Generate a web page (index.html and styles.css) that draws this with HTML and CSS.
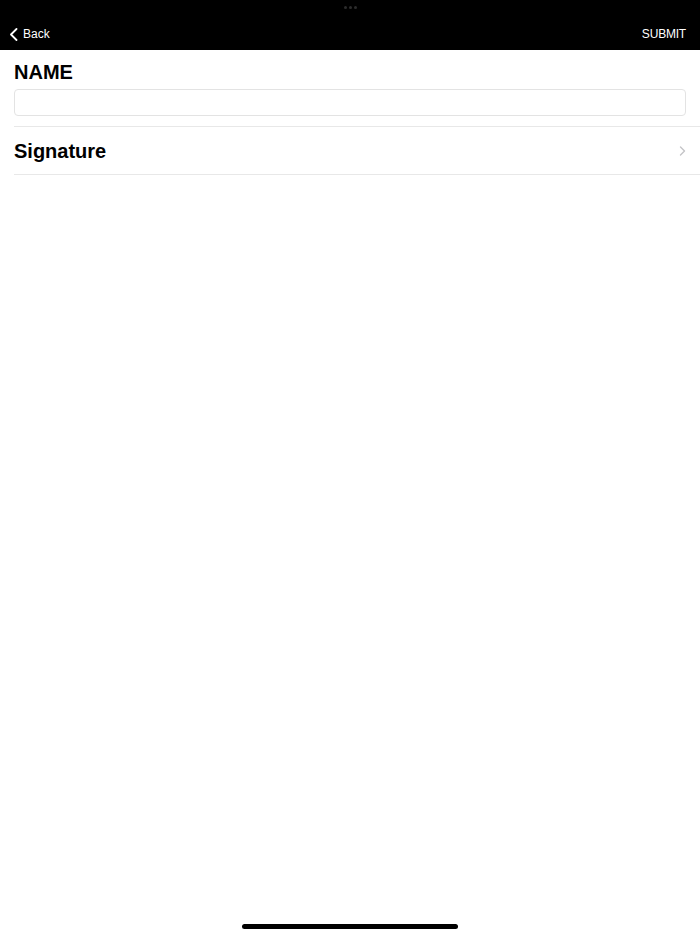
FILE: index.html
```html
<!DOCTYPE html>
<html lang="en">
<head>
    <meta charset="UTF-8">
    <meta name="viewport" content="width=device-width, initial-scale=1.0">
    <title>Signature</title>
    <link rel="stylesheet" href="styles.css">
</head>
<body>
    <div class="screen">
        <header class="navbar">
            <div class="grabber">
                <span></span><span></span><span></span>
            </div>
            <div class="nav-row">
                <a class="nav-back" href="#">
                    <svg class="back-icon" width="9" height="13" viewBox="0 0 9 13">
                        <path d="M7.5 1 L2 6.5 L7.5 12" fill="none" stroke="#fff" stroke-width="1.8" stroke-linecap="round" stroke-linejoin="round"/>
                    </svg>
                    Back
                </a>
                <a class="nav-action" href="#">SUBMIT</a>
            </div>
        </header>

        <main class="form">
            <div class="field">
                <label for="name">NAME</label>
                <input type="text" id="name">
            </div>
            <div class="row">
                <span class="row-title">Signature</span>
                <svg class="chevron" width="7" height="10" viewBox="0 0 7 10">
                    <path d="M1.5 1 L5.5 5 L1.5 9" fill="none" stroke="#c4c4c7" stroke-width="1.4" stroke-linecap="round" stroke-linejoin="round"/>
                </svg>
            </div>
        </main>

        <div class="home-indicator"></div>
    </div>
</body>
</html>
```

FILE: styles.css
```css
html, body {
    margin: 0;
    padding: 0;
}
body {
    font-family: "Liberation Sans", Arial, sans-serif;
    background-color: #fff;
    color: #000;
}
.screen {
    display: flex;
    flex-direction: column;
    min-height: 100vh;
}
.navbar {
    height: 50px;
    background-color: #000;
    display: flex;
    flex-direction: column;
    box-sizing: border-box;
}
.grabber {
    display: flex;
    justify-content: center;
    gap: 2px;
    padding-top: 6px;
}
.grabber span {
    width: 3px;
    height: 3px;
    border-radius: 50%;
    background-color: #2c2c2c;
}
.nav-row {
    display: flex;
    justify-content: space-between;
    align-items: center;
    padding: 17px 14px 0 9px;
}
.nav-row a {
    color: #fff;
    text-decoration: none;
    font-size: 12px;
    line-height: 16px;
}
.nav-back {
    display: flex;
    align-items: center;
    gap: 5px;
}
.nav-action {
    letter-spacing: -0.2px;
}
.back-icon {
    display: block;
}
.form {
    padding-top: 10px;
}
.field {
    margin-left: 14px;
    padding-right: 14px;
    padding-bottom: 10px;
    border-bottom: 1px solid #e8e8e8;
}
label {
    display: block;
    font-size: 20px;
    font-weight: bold;
    line-height: 24px;
    margin-bottom: 5px;
}
input[type="text"] {
    display: block;
    width: 100%;
    height: 27px;
    box-sizing: border-box;
    border: 1px solid #e3e3e3;
    border-radius: 4px;
    padding: 4px 8px;
    font-family: inherit;
    font-size: 14px;
    outline: none;
}
.row {
    display: flex;
    justify-content: space-between;
    align-items: center;
    height: 47px;
    margin-left: 14px;
    padding-right: 14px;
    border-bottom: 1px solid #e8e8e8;
}
.row-title {
    font-size: 20px;
    font-weight: bold;
    line-height: 24px;
}
.chevron {
    display: block;
}
.home-indicator {
    margin: auto auto 5px;
    width: 216px;
    height: 5px;
    border-radius: 3px;
    background-color: #000;
}
```
